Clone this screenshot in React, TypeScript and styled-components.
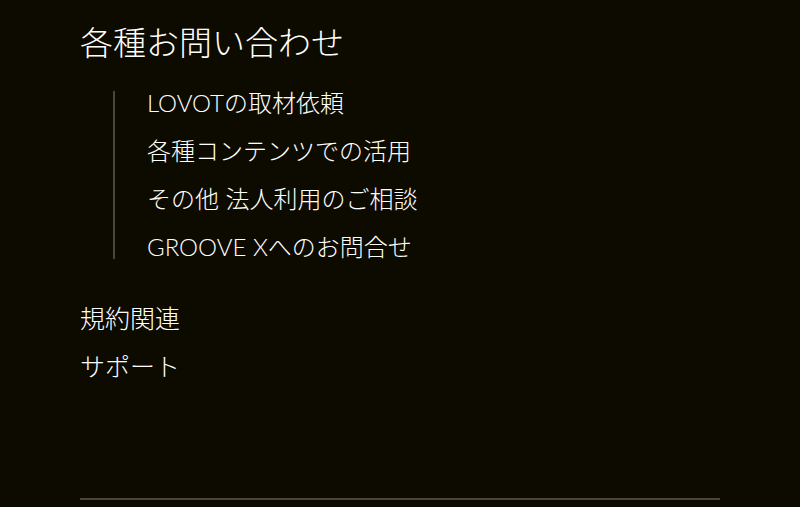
import styled, { createGlobalStyle } from "styled-components"

const GlobalStyle = createGlobalStyle`
  html, body {
    margin: 0;
    padding: 0;
    background: #0d0b00;
  }
`

const Footer = styled.footer`
  background-color: #0d0b00;
  color: #ffffff;
  font-family: Lato, "Noto Sans CJK JP", sans-serif;
  font-weight: 300;
  height: 507px;
  padding: 0 80px;
  box-sizing: border-box;
  display: flex;
  flex-direction: column;
  overflow: hidden;
`

const Heading = styled.h2`
  margin: 22px 0 0;
  font-size: 33px;
  font-weight: 300;
  line-height: 40px;
`

const SubList = styled.ul`
  list-style: none;
  margin: 29px 0 0 33px;
  padding: 0 0 0 32px;
  border-left: 2px solid #4a463a;
  display: flex;
  flex-direction: column;
  gap: 24px;
`

const SubItem = styled.li`
  font-size: 24px;
  line-height: 24px;
  cursor: pointer;
`

const MainList = styled.ul`
  list-style: none;
  margin: 35px 0 0;
  padding: 0;
`

const MainItem = styled.li`
  font-size: 25px;
  line-height: 48px;
  cursor: pointer;
`

const Divider = styled.hr`
  margin: auto 0 7px;
  border: none;
  border-top: 2px solid #4a463a;
  width: 100%;
`

const App = () => {
  return (
    <>
      <GlobalStyle />
      <Footer>
        <Heading>各種お問い合わせ</Heading>
        <SubList>
          <SubItem>LOVOTの取材依頼</SubItem>
          <SubItem>各種コンテンツでの活用</SubItem>
          <SubItem>その他 法人利用のご相談</SubItem>
          <SubItem>GROOVE Xへのお問合せ</SubItem>
        </SubList>
        <MainList>
          <MainItem>規約関連</MainItem>
          <MainItem>サポート</MainItem>
        </MainList>
        <Divider />
      </Footer>
    </>
  )
}

export default App
